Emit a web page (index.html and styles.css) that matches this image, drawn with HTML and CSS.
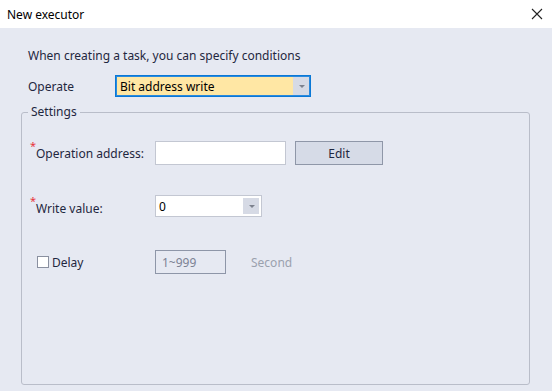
FILE: index.html
```html
<!DOCTYPE html>
<html lang="en">
<head>
  <meta charset="UTF-8">
  <title>New executor</title>
  <link rel="stylesheet" href="styles.css">
</head>
<body>
  <div class="dialog">
    <header class="titlebar">
      <span class="title">New executor</span>
      <svg class="close" width="12" height="12" viewBox="0 0 12 12">
        <path d="M1 1 L11 11 M11 1 L1 11" stroke="#222" stroke-width="1.1" fill="none"/>
      </svg>
    </header>

    <div class="content">
      <p class="intro">When creating a task, you can specify conditions</p>

      <div class="operate-row">
        <span class="operate-label">Operate</span>
        <div class="select select-active">
          <span class="select-value">Bit address write</span>
          <span class="select-arrow"></span>
        </div>
      </div>

      <fieldset class="settings">
        <legend>Settings</legend>

        <div class="row row-address">
          <span class="label required">Operation address:</span>
          <input class="text-input" type="text">
          <button class="btn">Edit</button>
        </div>

        <div class="row row-value">
          <span class="label required">Write value:</span>
          <div class="select select-small">
            <span class="select-value">0</span>
            <span class="select-arrow"></span>
          </div>
        </div>

        <div class="row row-delay">
          <label class="label check-label"><span class="checkbox"></span>Delay</label>
          <div class="delay-input">1~999</div>
          <span class="unit">Second</span>
        </div>
      </fieldset>
    </div>
  </div>
</body>
</html>
```

FILE: styles.css
```css
html, body {
  margin: 0;
  padding: 0;
}
body {
  font-family: "Noto Sans", "Open Sans", sans-serif;
  font-size: 12px;
  color: #1f2740;
  background-color: #e6e9f2;
}
.dialog {
  width: 552px;
  height: 391px;
  display: flex;
  flex-direction: column;
}
.titlebar {
  height: 28px;
  background-color: #fff;
  display: flex;
  justify-content: space-between;
  align-items: center;
  padding: 0 9px 0 7px;
}
.title {
  color: #000;
  font-size: 12px;
}
.content {
  flex: 1;
  padding: 0 22px 6px 21px;
  display: flex;
  flex-direction: column;
}
.intro {
  margin: 20px 0 0 7px;
  line-height: 16px;
}
.operate-row {
  display: flex;
  align-items: center;
  margin-top: 11px;
  padding-left: 7px;
}
.operate-label {
  width: 87px;
}
.select {
  display: flex;
  align-items: stretch;
  height: 22px;
  box-sizing: border-box;
  background-color: #fff;
  border: 1px solid #c3c7d2;
}
.select-active {
  width: 196px;
  border: 1px solid #0a78d6;
  box-shadow: inset 0 0 0 1px #2a8ade;
  background-color: #ffe7a4;
  padding: 1px;
}
.select-small {
  width: 107px;
}
.select-value {
  flex: 1;
  display: flex;
  align-items: center;
  padding-left: 3px;
  color: #000;
}
.select-arrow {
  width: 16px;
  background-color: #d6dae5;
  position: relative;
}
.select-small .select-arrow {
  margin: 2px;
}
.select-arrow::after {
  content: "";
  position: absolute;
  left: 6px;
  top: 50%;
  margin-top: -1px;
  border-left: 3px solid transparent;
  border-right: 3px solid transparent;
  border-top: 3px solid #7d828e;
}
.settings {
  flex: 1;
  margin: 8px 0 0 0;
  padding: 0;
  border: 1px solid #b9bdc9;
  border-radius: 3px;
  min-width: 0;
}
.settings legend {
  margin-left: 6px;
  padding: 0 3px;
  line-height: 14px;
}
.row {
  display: flex;
  align-items: center;
  padding-left: 133px;
  position: relative;
}
.label {
  position: absolute;
  left: 14px;
}
.required::before {
  content: "*";
  position: absolute;
  left: -6px;
  top: -7px;
  color: #e8363c;
  font-size: 11px;
}
.row-address {
  margin-top: 22px;
}
.text-input {
  width: 131px;
  height: 24px;
  box-sizing: border-box;
  border: 1px solid #c3c7d2;
  background-color: #fff;
  margin: 0;
  padding: 0 3px;
  outline: none;
}
.btn {
  width: 88px;
  height: 24px;
  margin-left: 9px;
  box-sizing: border-box;
  border: 1px solid #8f97a8;
  background-color: #d6dbe7;
  font-family: inherit;
  font-size: 12px;
  color: #1f2740;
  padding: 0;
}
.row-value {
  margin-top: 30px;
}
.row-value .label {
  top: 5px;
}
.row-delay {
  margin-top: 33px;
}
.check-label {
  left: 15px;
  display: flex;
  align-items: center;
  gap: 3px;
}
.checkbox {
  width: 12px;
  height: 12px;
  box-sizing: border-box;
  border: 1px solid #8a90a0;
  background-color: #fff;
}
.delay-input {
  width: 71px;
  height: 24px;
  box-sizing: border-box;
  border: 1px solid #8e96a8;
  padding-left: 6px;
  display: flex;
  align-items: center;
  color: #7c8294;
}
.unit {
  margin-left: 25px;
  color: #9ba1ae;
}
```
